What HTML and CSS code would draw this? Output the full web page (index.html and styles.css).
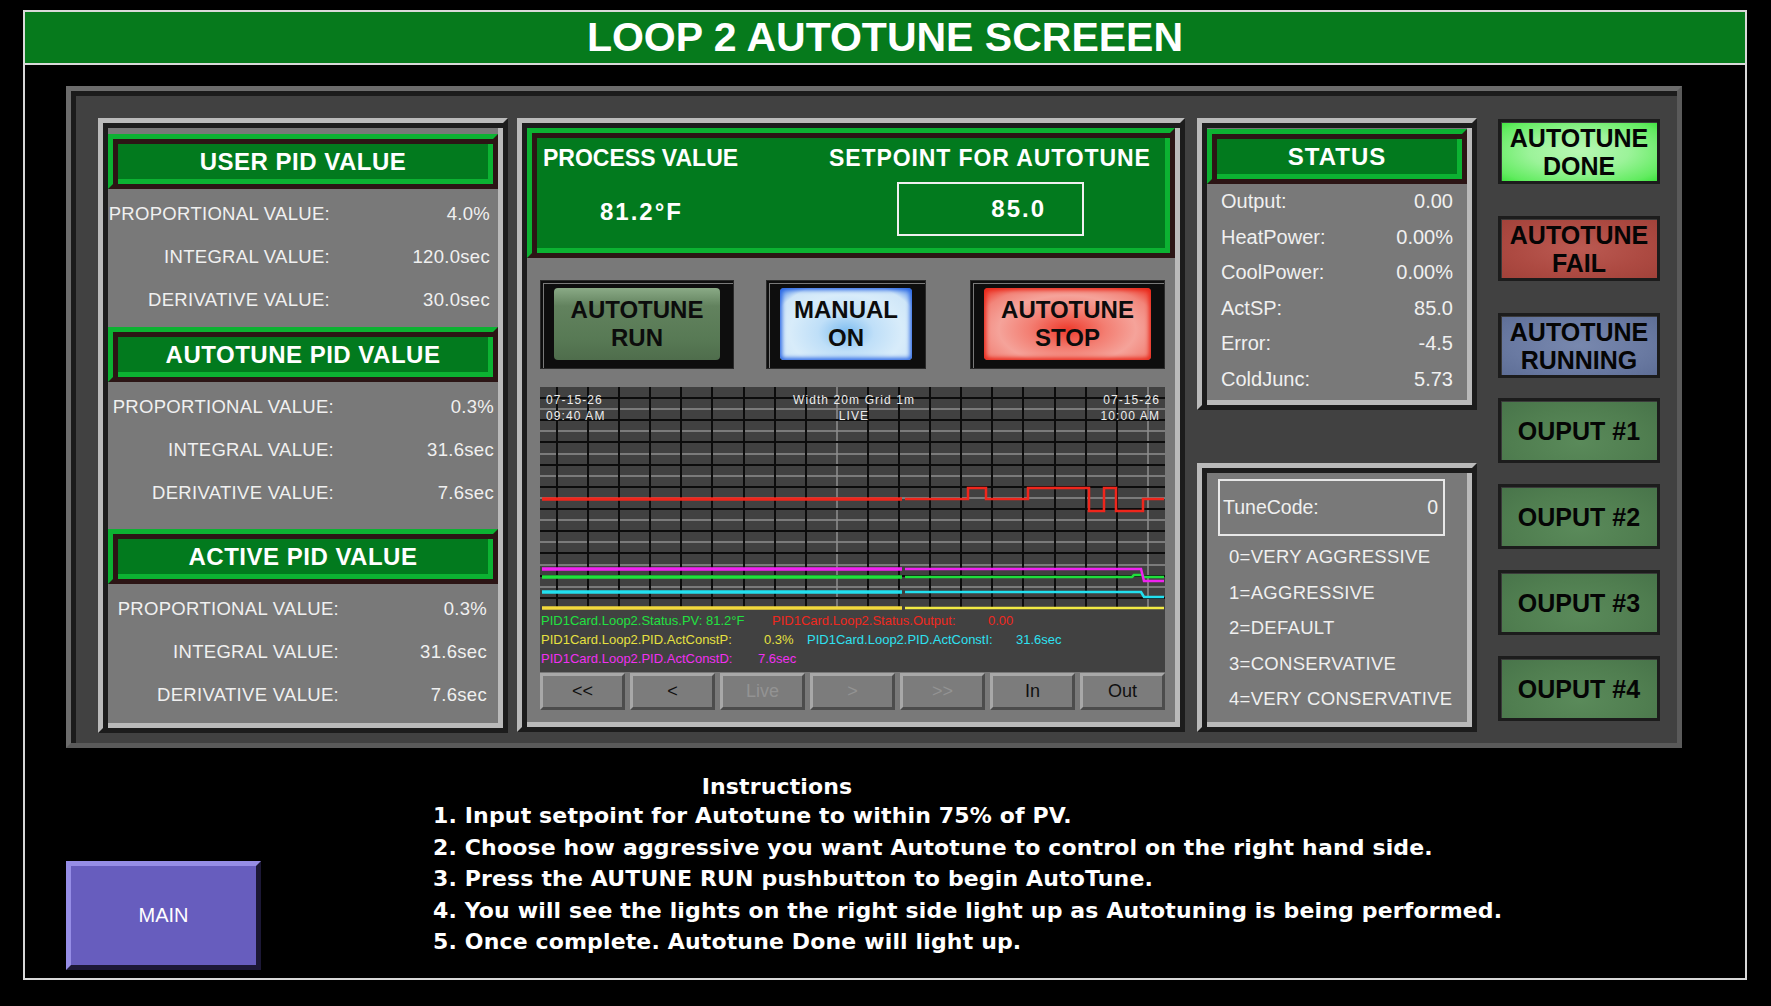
FILE: index.html
```html
<!DOCTYPE html>
<html lang="en">
<head>
    <meta charset="UTF-8">
    <title>Loop 2 Autotune Screen</title>
    <link rel="stylesheet" href="styles.css">
</head>
<body>
    <div class="frame">
        <div class="title-bar">LOOP 2 AUTOTUNE SCREEEN</div>

        <div class="main-panel">
            <!-- PID values -->
            <section class="groove pid-panel">
                <div class="green-head pid-head">USER PID VALUE</div>
                <div class="pid-row"><span>PROPORTIONAL VALUE:</span><span>4.0%</span></div>
                <div class="pid-row"><span>INTEGRAL VALUE:</span><span>120.0sec</span></div>
                <div class="pid-row"><span>DERIVATIVE VALUE:</span><span>30.0sec</span></div>

                <div class="green-head pid-head pid-head-tight">AUTOTUNE PID VALUE</div>
                <div class="pid-row shift-a"><span>PROPORTIONAL VALUE:</span><span>0.3%</span></div>
                <div class="pid-row shift-a"><span>INTEGRAL VALUE:</span><span>31.6sec</span></div>
                <div class="pid-row shift-a"><span>DERIVATIVE VALUE:</span><span>7.6sec</span></div>

                <div class="green-head pid-head pid-head-loose">ACTIVE PID VALUE</div>
                <div class="pid-row shift-b"><span>PROPORTIONAL VALUE:</span><span>0.3%</span></div>
                <div class="pid-row shift-b"><span>INTEGRAL VALUE:</span><span>31.6sec</span></div>
                <div class="pid-row shift-b"><span>DERIVATIVE VALUE:</span><span>7.6sec</span></div>
            </section>

            <!-- process value, pushbuttons and trend -->
            <section class="groove center-panel">
                <div class="green-head pv-box">
                    <div class="pv-col">
                        <div class="pv-title">PROCESS VALUE</div>
                        <div class="pv-value">81.2°F</div>
                    </div>
                    <div class="sp-col">
                        <div class="pv-title sp-title">SETPOINT FOR AUTOTUNE</div>
                        <div class="sp-input">85.0</div>
                    </div>
                </div>

                <div class="push-row">
                    <div class="push push-run"><div class="face">AUTOTUNE<br>RUN</div></div>
                    <div class="push push-manual"><div class="face">MANUAL<br>ON</div></div>
                    <div class="push push-stop"><div class="face">AUTOTUNE<br>STOP</div></div>
                </div>

                <div class="trend">
                    <svg class="trend-svg" width="625" height="285" viewBox="0 0 625 285">
                        <rect width="625" height="285" fill="#414141"/>
                        <path class="grid-gray" d="M0 22H625M0 44H625M0 67H625M0 89H625M0 111H625M0 133H625M0 155H625M0 178H625M0 200H625M297 0V221M608 0V221"/>
                        <path class="grid-black" d="M0 11H625M0 33H625M0 55H625M0 78H625M0 100H625M0 122H625M0 144H625M0 166H625M0 189H625M0 211H625M17 0V221M48 0V221M79 0V221M110 0V221M141 0V221M172 0V221M204 0V221M235 0V221M266 0V221M328 0V221M359 0V221M390 0V221M421 0V221M452 0V221M483 0V221M515 0V221M546 0V221M577 0V221"/>

                        <text class="ts" x="6" y="17">07-15-26</text>
                        <text class="ts" x="6" y="33">09:40 AM</text>
                        <text class="ts" x="314" y="17" text-anchor="middle">Width 20m  Grid 1m</text>
                        <text class="ts" x="314" y="33" text-anchor="middle">LIVE</text>
                        <text class="ts" x="620" y="17" text-anchor="end">07-15-26</text>
                        <text class="ts" x="620" y="33" text-anchor="end">10:00 AM</text>

                        <path class="pen pen-left" stroke="#f2d93c" d="M2 221H362"/>
                        <path class="pen" stroke="#f2ea44" d="M365 221H624"/>
                        <path class="pen pen-left" stroke="#22e0f0" d="M2 205H362"/>
                        <path class="pen" stroke="#22e0f0" d="M365 205H601L604 210H624"/>
                        <path class="pen pen-left" stroke="#1fe03c" d="M2 190H362"/>
                        <path class="pen" stroke="#1fe03c" d="M365 190H592L594 188H602L604 190H624"/>
                        <path class="pen pen-left" stroke="#f022f0" d="M2 182H362"/>
                        <path class="pen" stroke="#f022f0" d="M365 182H601L604 194H624"/>
                        <path class="pen pen-left" stroke="#f0261c" d="M2 112H362"/>
                        <path class="pen" stroke="#f0261c" d="M365 112H428V101H446V112H488V101H549V124H564V101H576V124H603V112H624"/>

                        <text class="lg" x="1" y="238" fill="#22e040">PID1Card.Loop2.Status.PV: 81.2°F</text>
                        <text class="lg" x="232" y="238" fill="#f0281e">PID1Card.Loop2.Status.Output:</text>
                        <text class="lg" x="448" y="238" fill="#f0281e">0.00</text>
                        <text class="lg" x="1" y="257" fill="#e6e040">PID1Card.Loop2.PID.ActConstP:</text>
                        <text class="lg" x="224" y="257" fill="#e6e040">0.3%</text>
                        <text class="lg" x="267" y="257" fill="#2ee0f0">PID1Card.Loop2.PID.ActConstI:</text>
                        <text class="lg" x="476" y="257" fill="#2ee0f0">31.6sec</text>
                        <text class="lg" x="1" y="276" fill="#f030f0">PID1Card.Loop2.PID.ActConstD:</text>
                        <text class="lg" x="218" y="276" fill="#f030f0">7.6sec</text>
                    </svg>
                </div>

                <div class="trend-nav">
                    <button>&lt;&lt;</button>
                    <button>&lt;</button>
                    <button class="off">Live</button>
                    <button class="off">&gt;</button>
                    <button class="off">&gt;&gt;</button>
                    <button>In</button>
                    <button>Out</button>
                </div>
            </section>

            <div class="right-col">
                <section class="groove status-panel">
                    <div class="green-head status-head">STATUS</div>
                    <div class="status-row"><span>Output:</span><span>0.00</span></div>
                    <div class="status-row"><span>HeatPower:</span><span>0.00%</span></div>
                    <div class="status-row"><span>CoolPower:</span><span>0.00%</span></div>
                    <div class="status-row"><span>ActSP:</span><span>85.0</span></div>
                    <div class="status-row"><span>Error:</span><span>-4.5</span></div>
                    <div class="status-row"><span>ColdJunc:</span><span>5.73</span></div>
                </section>

                <section class="groove tune-panel">
                    <div class="tune-code"><span>TuneCode:</span><span>0</span></div>
                    <div class="tune-item">0=VERY AGGRESSIVE</div>
                    <div class="tune-item">1=AGGRESSIVE</div>
                    <div class="tune-item">2=DEFAULT</div>
                    <div class="tune-item">3=CONSERVATIVE</div>
                    <div class="tune-item">4=VERY CONSERVATIVE</div>
                </section>
            </div>

            <div class="lights">
                <div class="light-group state-group">
                    <div class="light light-done">AUTOTUNE<br>DONE</div>
                    <div class="light light-fail">AUTOTUNE<br>FAIL</div>
                    <div class="light light-running">AUTOTUNE<br>RUNNING</div>
                </div>
                <div class="light-group">
                    <div class="light light-out">OUPUT #1</div>
                    <div class="light light-out">OUPUT #2</div>
                    <div class="light light-out">OUPUT #3</div>
                    <div class="light light-out">OUPUT #4</div>
                </div>
            </div>
        </div>

        <div class="bottom">
            <button class="main-btn">MAIN</button>
            <div class="instructions">
                <div class="instr-title">Instructions</div>
                <div>1. Input setpoint for Autotune to within 75% of PV.</div>
                <div>2. Choose how aggressive you want Autotune to control on the right hand side.</div>
                <div>3. Press the AUTUNE RUN pushbutton to begin AutoTune.</div>
                <div>4. You will see the lights on the right side light up as Autotuning is being performed.</div>
                <div>5. Once complete. Autotune Done will light up.</div>
            </div>
        </div>
    </div>
</body>
</html>
```

FILE: styles.css
```css
* {
    box-sizing: border-box;
}
body {
    margin: 0;
    background: #000;
    font-family: 'Liberation Sans', Arial, sans-serif;
    color: #fff;
}
.frame {
    margin: 10px 0 0 23px;
    width: 1724px;
    height: 970px;
    border: 2px solid #d9d9d9;
}
.title-bar {
    height: 53px;
    background: #067a1c;
    border-bottom: 2px solid #d9d9d9;
    text-align: center;
    font-size: 41px;
    font-weight: bold;
    line-height: 51px;
}

/* big dark panel */
.main-panel {
    display: flex;
    align-items: flex-start;
    margin: 21px 0 0 41px;
    width: 1616px;
    height: 662px;
    padding: 27px 0 0 27px;
    background: #414141;
    border: 5px solid;
    border-color: #6c6c6c #5a5a5a #5a5a5a #6c6c6c;
    box-shadow: inset 5px 5px 0 #1b1b1b;
}
.groove {
    background: #797979;
    padding: 5px;
    border: 5px solid;
    border-color: #bababa #1c1c1c #1c1c1c #bababa;
    box-shadow: inset 5px 5px 0 #1c1c1c, inset -5px -5px 0 #bababa;
}
.green-head {
    background: #027a1e;
    border: 5px solid;
    border-color: #0cb232 #2c1515 #2c1515 #0cb232;
    box-shadow: inset 5px 5px 0 #2c1515, inset -5px -5px 0 #0cb232;
    color: #fff;
    font-weight: bold;
}

/* left column */
.pid-panel {
    width: 410px;
    height: 615px;
}
.pid-head {
    height: 55px;
    margin: 12px 0 3px;
    display: flex;
    align-items: center;
    justify-content: center;
    font-size: 24px;
    letter-spacing: 0.5px;
}
.pid-head:first-child {
    margin-top: 6px;
}
.pid-head-tight {
    margin-top: 6px;
}
.pid-head-loose {
    margin-top: 15px;
}
.pid-row {
    display: grid;
    grid-template-columns: 222px 160px;
    height: 43px;
    align-items: center;
    font-size: 18.5px;
    letter-spacing: 0.3px;
    color: #f0f0f0;
    text-align: right;
}
.shift-a {
    grid-template-columns: 226px 160px;
}
.shift-b {
    grid-template-columns: 231px 148px;
}

/* centre column */
.center-panel {
    width: 668px;
    height: 614px;
    margin-left: 9px;
}
.pv-box {
    display: flex;
    height: 130px;
    padding: 8px 6px 0 11px;
}
.pv-col {
    width: 286px;
}
.pv-title {
    font-size: 23px;
    line-height: 24px;
    margin-top: 5px;
}
.sp-title {
    letter-spacing: 0.9px;
}
.pv-value {
    margin: 27px 0 0 57px;
    font-size: 24px;
    line-height: 30px;
    letter-spacing: 2px;
}
.sp-input {
    width: 187px;
    height: 54px;
    margin: 12px 0 0 68px;
    border: 2px solid #f0f0f0;
    font-size: 24px;
    letter-spacing: 2px;
    line-height: 50px;
    text-align: right;
    padding-right: 36px;
}
.push-row {
    display: flex;
    margin: 22px 0 0 13px;
}
.push {
    height: 89px;
    padding: 7px 13px 8px;
    background: #0e0e0e;
    border: 1px solid #2a2a2a;
    box-shadow: inset 2px 2px 0 #0e0e0e, inset 3px 3px 0 #7a7a7a;
}
.push .face {
    height: 100%;
    border-radius: 4px;
    display: flex;
    align-items: center;
    justify-content: center;
    text-align: center;
    color: #0c0c0c;
    font-size: 24px;
    font-weight: bold;
    line-height: 28px;
}
.push-run {
    width: 194px;
}
.push-run .face {
    background: linear-gradient(#8aaa86, #62825e 25%, #587a55 70%, #4f6d4c);
}
.push-manual {
    width: 160px;
    margin-left: 32px;
}
.push-manual .face {
    background: radial-gradient(ellipse at 50% 62%, #7cbcf0 0%, #bfdff8 30%, #d8ecfa 60%, #cfe6f8 80%, #3b7ae8 100%);
    box-shadow: inset 0 0 4px 2px #2a66e4;
}
.push-stop {
    width: 195px;
    margin-left: 44px;
}
.push-stop .face {
    background: radial-gradient(ellipse at 50% 58%, #ee3a2c 0%, #f37e72 32%, #f5a39a 58%, #f2857a 78%, #ec2a1c 100%);
    box-shadow: inset 0 0 4px 2px #e8281a;
}
.trend {
    margin: 18px 0 0 13px;
    width: 625px;
    height: 285px;
}
.trend-svg {
    display: block;
}
.grid-gray {
    stroke: #8e8e8e;
    stroke-width: 1.5;
    fill: none;
}
.grid-black {
    stroke: #0c0c0c;
    stroke-width: 2;
    fill: none;
}
.pen {
    fill: none;
    stroke-width: 2.5;
}
.pen-left {
    stroke-width: 3.5;
}
.ts {
    font-family: 'Liberation Sans', Arial, sans-serif;
    font-size: 12px;
    letter-spacing: 1.1px;
    fill: #ededed;
}
.lg {
    font-family: 'Liberation Sans', Arial, sans-serif;
    font-size: 13px;
}
.trend-nav {
    display: grid;
    grid-template-columns: repeat(7, 1fr);
    gap: 5px;
    width: 625px;
    height: 37px;
    margin: 1px 0 0 13px;
}
.trend-nav button {
    background: #7c7c7c;
    border: 3px solid;
    border-color: #a8a8a8 #4c4c4c #4c4c4c #a8a8a8;
    font-family: 'Liberation Sans', Arial, sans-serif;
    font-size: 18px;
    color: #101010;
    padding: 0;
}
.trend-nav .off {
    color: #939393;
}

/* right column */
.right-col {
    margin-left: 12px;
    width: 280px;
}
.status-panel {
    height: 292px;
}
.status-head {
    height: 55px;
    margin-top: 1px;
    display: flex;
    align-items: center;
    justify-content: center;
    font-size: 24px;
    letter-spacing: 1px;
}
.status-row {
    display: flex;
    justify-content: space-between;
    height: 35.5px;
    align-items: center;
    padding: 0 14px 0 14px;
    font-size: 20px;
    color: #f0f0f0;
}
.tune-panel {
    height: 269px;
    margin-top: 53px;
}
.tune-code {
    display: flex;
    justify-content: space-between;
    align-items: center;
    height: 57px;
    margin: 6px 22px 0 11px;
    padding: 0 5px 0 3px;
    border: 2px solid #e8e8e8;
    font-size: 19.5px;
    color: #f0f0f0;
}
.tune-code + .tune-item {
    margin-top: 3px;
}
.tune-item {
    height: 35.5px;
    line-height: 35.5px;
    padding-left: 22px;
    font-size: 18.5px;
    letter-spacing: 0.3px;
    color: #f0f0f0;
}

/* indicator lights */
.lights {
    margin: 1px 0 0 21px;
    width: 162px;
}
.light-group {
    display: flex;
    flex-direction: column;
    gap: 21px;
}
.state-group {
    gap: 32px;
    margin-bottom: 20px;
}
.light {
    height: 65px;
    border: 3px solid #1c1c1c;
    box-shadow: inset 1px 1px 0 #3a3a3a;
    display: flex;
    align-items: center;
    justify-content: center;
    text-align: center;
    color: #050505;
    font-size: 25px;
    font-weight: bold;
    line-height: 28px;
}
.light-done {
    background: radial-gradient(ellipse at 50% 50%, #b8f8b4 0%, #9cf39a 45%, #62ec60 85%, #3ee43e 100%);
}
.light-fail {
    background: radial-gradient(ellipse at 50% 50%, #bb5a52 0%, #ad4a42 60%, #a2423a 100%);
}
.light-running {
    background: radial-gradient(ellipse at 50% 50%, #7888ae 0%, #6a7aa2 60%, #5e6e96 100%);
}
.light-out {
    background: radial-gradient(ellipse at 50% 70%, #5a8a5a 0%, #507e50 60%, #48744a 100%);
}

/* bottom area */
.bottom {
    display: flex;
    align-items: flex-start;
    padding-left: 41px;
}
.main-btn {
    width: 195px;
    height: 109px;
    margin-top: 113px;
    background: #675dbe;
    border: 5px solid;
    border-color: #968de6 #1c1836 #1c1836 #968de6;
    color: #fff;
    font-family: 'Liberation Sans', Arial, sans-serif;
    font-size: 20px;
}
.instructions {
    margin: 26px 0 0 172px;
    font-family: 'DejaVu Sans', sans-serif;
    font-weight: bold;
    font-size: 22px;
    letter-spacing: 0.15px;
    line-height: 31.5px;
    color: #fff;
}
.instructions .instr-title {
    width: 688px;
    text-align: center;
    line-height: 26px;
}
```
